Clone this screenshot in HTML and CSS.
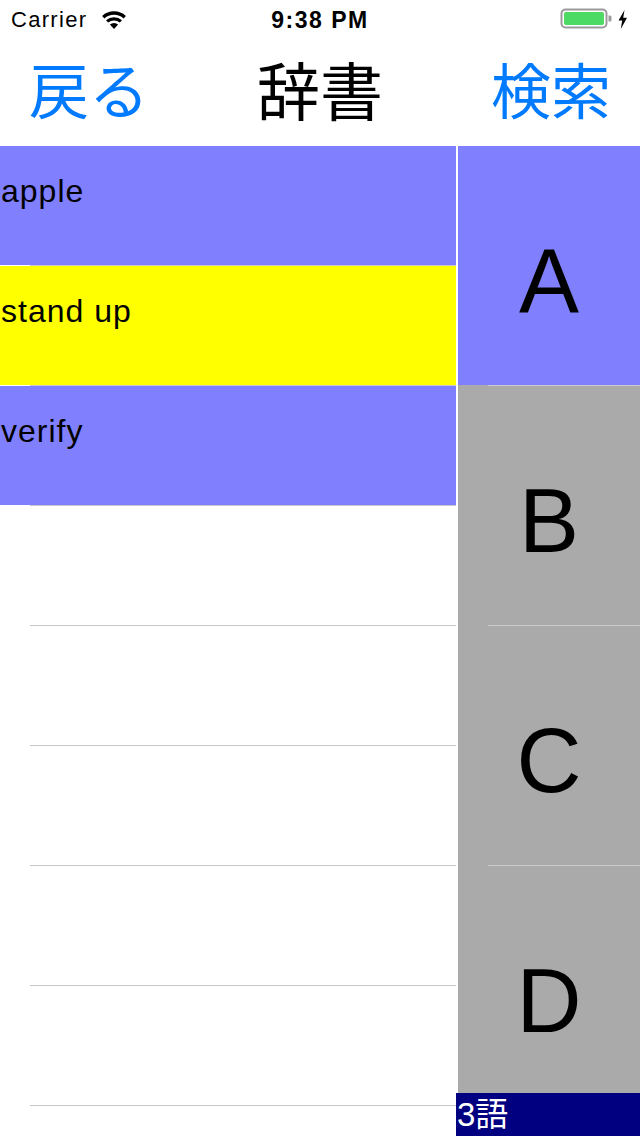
FILE: index.html
```html
<!DOCTYPE html>
<html lang="ja">
<head>
<meta charset="utf-8">
<title>辞書</title>
<link rel="stylesheet" href="styles.css">
</head>
<body>
<div class="screen">
  <div class="status">
    <div class="status-left">
      <span class="carrier">Carrier</span>
      <svg class="wifi" width="28" height="22" viewBox="0 0 28 22">
        <path d="M14 20 L9.9 15.5 A6 6 0 0 1 18.1 15.5 Z" fill="#000"/>
        <path d="M8.2 13.6 A8.7 8.7 0 0 1 19.8 13.6 L22 11.2 A12 12 0 0 0 6 11.2 Z" fill="#000"/>
        <path d="M4.4 9.4 A14.3 14.3 0 0 1 23.6 9.4 L25.9 6.9 A17.6 17.6 0 0 0 2.1 6.9 Z" fill="#000"/>
      </svg>
    </div>
    <div class="time">9:38 PM</div>
    <div class="status-right">
      <svg class="battery" width="70" height="40" viewBox="0 0 70 40">
        <rect x="2.5" y="9.5" width="45" height="18" rx="4" ry="4" fill="none" stroke="#9b9b9b" stroke-width="2"/>
        <rect x="5" y="12" width="40" height="13" rx="2" ry="2" fill="#4cd964"/>
        <path d="M49.5 15.5 h1.5 a1.5 1.5 0 0 1 1.5 1.5 v3 a1.5 1.5 0 0 1 -1.5 1.5 h-1.5 Z" fill="#9b9b9b"/>
        <path d="M65.5 10 L59.5 20.5 H63.2 L61.8 29 L68 17.8 H64.2 Z" fill="#000"/>
      </svg>
    </div>
  </div>
  <div class="nav">
    <div class="nav-btn nav-left">戻る</div>
    <div class="nav-title">辞書</div>
    <div class="nav-btn nav-right">検索</div>
  </div>
  <div class="main">
    <div class="words">
      <div class="word-row c-blue"><span class="word">apple</span></div>
      <div class="sep"></div>
      <div class="word-row c-yellow"><span class="word">stand up</span></div>
      <div class="sep"></div>
      <div class="word-row c-blue"><span class="word">verify</span></div>
      <div class="sep"></div>
      <div class="word-row"></div>
      <div class="sep"></div>
      <div class="word-row"></div>
      <div class="sep"></div>
      <div class="word-row"></div>
      <div class="sep"></div>
      <div class="word-row"></div>
      <div class="sep"></div>
      <div class="word-row"></div>
      <div class="sep"></div>
      <div class="word-row"></div>
    </div>
    <div class="index">
      <div class="idx-row c-blue">A</div>
      <div class="idx-sep"></div>
      <div class="idx-row c-gray">B</div>
      <div class="idx-sep"></div>
      <div class="idx-row c-gray">C</div>
      <div class="idx-sep"></div>
      <div class="idx-row c-gray">D</div>
      <div class="idx-sep"></div>
    </div>
  </div>
  <div class="count">3語</div>
</div>
</body>
</html>
```

FILE: styles.css
```css
html, body {
  margin: 0;
  padding: 0;
  background: #ffffff;
}
.screen {
  position: relative;
  width: 640px;
  height: 1136px;
  overflow: hidden;
  font-family: "Liberation Sans", "Noto Sans CJK JP", sans-serif;
  color: #000;
}
.status {
  height: 40px;
  display: grid;
  grid-template-columns: 1fr auto 1fr;
  align-items: center;
}
.status-left {
  display: flex;
  align-items: center;
  padding-left: 11px;
  gap: 13px;
}
.carrier {
  font-size: 22px;
  letter-spacing: 1.3px;
  line-height: 40px;
}
.wifi {
  display: block;
  margin-top: -1px;
}
.time {
  font-size: 23px;
  font-weight: bold;
  letter-spacing: 1.5px;
  line-height: 40px;
}
.status-right {
  display: flex;
  justify-content: flex-end;
  padding-right: 11px;
}
.battery {
  display: block;
}
.nav {
  height: 106px;
  display: grid;
  grid-template-columns: 1fr auto 1fr;
  align-items: center;
  box-sizing: border-box;
  padding-bottom: 10px;
  font-family: "Noto Sans CJK JP", sans-serif;
}
.nav-btn {
  font-size: 60px;
  line-height: 62px;
  color: #007aff;
}
.nav-left {
  padding-left: 29px;
}
.nav-right {
  text-align: right;
  padding-right: 29px;
}
.nav-title {
  font-size: 63px;
  line-height: 62px;
  color: #000;
}
.main {
  display: flex;
  align-items: flex-start;
}
.words {
  width: 456px;
  display: flex;
  flex-direction: column;
}
.word-row {
  height: 119px;
  box-sizing: border-box;
  padding-top: 25px;
  padding-left: 1px;
}
.word {
  font-size: 32px;
  line-height: 40px;
  letter-spacing: 1px;
  display: block;
}
.sep {
  height: 1px;
  margin-left: 30px;
  background: #c8c7cc;
}
.index {
  width: 182px;
  margin-left: 2px;
  display: flex;
  flex-direction: column;
}
.idx-row {
  height: 239px;
  box-sizing: border-box;
  padding-top: 80px;
  font-size: 90px;
  line-height: 110px;
  text-align: center;
}
.idx-sep {
  height: 1px;
  background: linear-gradient(to right, #aaaaaa 0, #aaaaaa 30px, #cbcbcf 30px);
}
.c-blue { background: #8080ff; }
.c-yellow { background: #ffff00; }
.c-gray { background: #aaaaaa; }
.count {
  position: absolute;
  left: 456px;
  bottom: 0;
  width: 184px;
  height: 43px;
  box-sizing: border-box;
  background: #000080;
  color: #ffffff;
  font-size: 33px;
  line-height: 40px;
  padding-left: 1px;
  padding-top: 2px;
}
```
